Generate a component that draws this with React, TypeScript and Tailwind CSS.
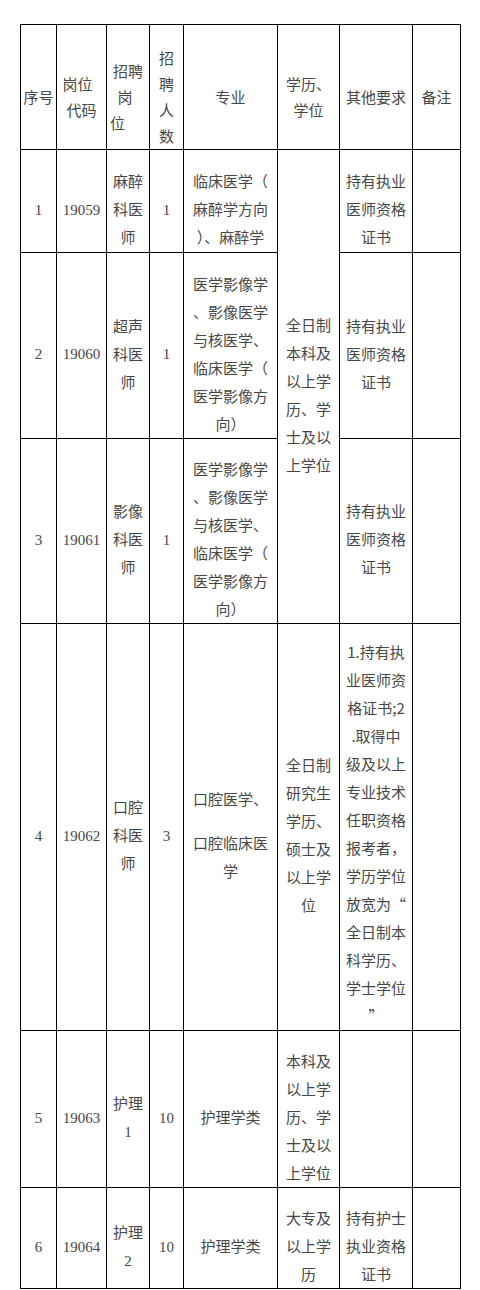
const cell = "border border-black align-middle text-center p-0 pt-[16px] leading-[28px]";
const head = "border border-black align-middle text-center p-0 pt-[20px] leading-[26px]";

function Lines({ lines }: { lines: string[] }) {
  return (
    <>
      {lines.map((l, i) => (
        <div key={i}>{l}</div>
      ))}
    </>
  );
}

// digits are set in a serif face, like the original sheet
function Num({ children }: { children: string }) {
  return <span className="font-['Liberation_Serif',serif]">{children}</span>;
}

const licence = ["持有执业", "医师资格", "证书"];
const imaging = ["医学影像学", "、影像医学", "与核医学、", "临床医学（", "医学影像方", "向）"];

export default function App() {
  return (
    <div
      lang="zh-CN"
      className="w-[480px] h-[1290px] bg-white text-[15px] text-[#474747] pt-[24px] pl-[20px] font-['Noto_Sans_CJK_SC',sans-serif]"
    >
      <table className="table-fixed border-collapse w-[440px]">
        <colgroup>
          <col className="w-[36px]" />
          <col className="w-[50px]" />
          <col className="w-[43px]" />
          <col className="w-[34px]" />
          <col className="w-[94px]" />
          <col className="w-[62px]" />
          <col className="w-[73px]" />
          <col className="w-[48px]" />
        </colgroup>
        <tbody>
          <tr className="h-[125px]">
            <td className={head}>序号</td>
            <td className={head}>
              <div className="pr-[8px]">岗位</div>
              <div>代码</div>
            </td>
            <td className={head}>
              <div>招聘</div>
              <div className="pr-[6px]">岗</div>
              <div className="text-left pl-[3px]">位</div>
            </td>
            <td className={head}>
              <Lines lines={["招", "聘", "人", "数"]} />
            </td>
            <td className={head}>专业</td>
            <td className={head}>
              <Lines lines={["学历、", "学位"]} />
            </td>
            <td className={head}>其他要求</td>
            <td className={head}>备注</td>
          </tr>

          <tr className="h-[103px]">
            <td className={cell}><Num>1</Num></td>
            <td className={cell}><Num>19059</Num></td>
            <td className={cell}>
              <Lines lines={["麻醉", "科医", "师"]} />
            </td>
            <td className={cell}><Num>1</Num></td>
            <td className={cell}>
              <Lines lines={["临床医学（", "麻醉学方向", "）、麻醉学"]} />
            </td>
            <td className={cell} rowSpan={3}>
              <Lines lines={["全日制", "本科及", "以上学", "历、学", "士及以", "上学位"]} />
            </td>
            <td className={cell}>
              <Lines lines={licence} />
            </td>
            <td className={cell}></td>
          </tr>

          <tr className="h-[186px]">
            <td className={cell}><Num>2</Num></td>
            <td className={cell}><Num>19060</Num></td>
            <td className={cell}>
              <Lines lines={["超声", "科医", "师"]} />
            </td>
            <td className={cell}><Num>1</Num></td>
            <td className={cell}>
              <Lines lines={imaging} />
            </td>
            <td className={cell}>
              <Lines lines={licence} />
            </td>
            <td className={cell}></td>
          </tr>

          <tr className="h-[184px]">
            <td className={cell}><Num>3</Num></td>
            <td className={cell}><Num>19061</Num></td>
            <td className={cell}>
              <Lines lines={["影像", "科医", "师"]} />
            </td>
            <td className={cell}><Num>1</Num></td>
            <td className={cell}>
              <Lines lines={imaging} />
            </td>
            <td className={cell}>
              <Lines lines={licence} />
            </td>
            <td className={cell}></td>
          </tr>

          <tr className="h-[407px]">
            <td className={cell}><Num>4</Num></td>
            <td className={cell}><Num>19062</Num></td>
            <td className={cell}>
              <Lines lines={["口腔", "科医", "师"]} />
            </td>
            <td className={cell}><Num>3</Num></td>
            <td className={cell}>
              <div className="mb-[16px]">口腔医学、</div>
              <Lines lines={["口腔临床医", "学"]} />
            </td>
            <td className={cell}>
              <Lines lines={["全日制", "研究生", "学历、", "硕士及", "以上学", "位"]} />
            </td>
            <td className="border border-black align-middle text-center p-0 pt-[14px] leading-[28px]">
              <Lines
                lines={[
                  "1.持有执",
                  "业医师资",
                  "格证书;2",
                  ".取得中",
                  "级及以上",
                  "专业技术",
                  "任职资格",
                  "报考者，",
                  "学历学位",
                  "放宽为“",
                  "全日制本",
                  "科学历、",
                  "学士学位",
                  "”",
                ]}
              />
            </td>
            <td className={cell}></td>
          </tr>

          <tr className="h-[156px]">
            <td className={cell}><Num>5</Num></td>
            <td className={cell}><Num>19063</Num></td>
            <td className={cell}>
              <div>护理</div>
              <div><Num>1</Num></div>
            </td>
            <td className={cell}><Num>10</Num></td>
            <td className={cell}>护理学类</td>
            <td className={cell}>
              <Lines lines={["本科及", "以上学", "历、学", "士及以", "上学位"]} />
            </td>
            <td className={cell}></td>
            <td className={cell}></td>
          </tr>

          <tr className="h-[100px]">
            <td className={cell}><Num>6</Num></td>
            <td className={cell}><Num>19064</Num></td>
            <td className={cell}>
              <div>护理</div>
              <div><Num>2</Num></div>
            </td>
            <td className={cell}><Num>10</Num></td>
            <td className={cell}>护理学类</td>
            <td className={cell}>
              <Lines lines={["大专及", "以上学", "历"]} />
            </td>
            <td className={cell}>
              <Lines lines={["持有护士", "执业资格", "证书"]} />
            </td>
            <td className={cell}></td>
          </tr>
        </tbody>
      </table>
    </div>
  );
}
